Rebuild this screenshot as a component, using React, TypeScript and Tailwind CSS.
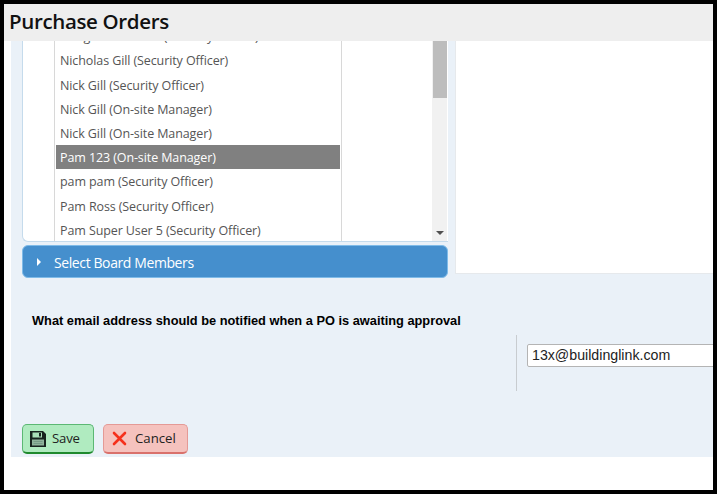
const users = [
  "Morgan Hamilton (Security Officer)",
  "Nicholas Gill (Security Officer)",
  "Nick Gill (Security Officer)",
  "Nick Gill (On-site Manager)",
  "Nick Gill (On-site Manager)",
  "Pam 123 (On-site Manager)",
  "pam pam (Security Officer)",
  "Pam Ross (Security Officer)",
  "Pam Super User 5 (Security Officer)",
];

const SaveIcon = () => (
  <svg width="18" height="18" viewBox="0 0 18 18">
    <path d="M1 1h13l3 3v13H1z" fill="#17231e" />
    <rect x="3.5" y="2.5" width="9.5" height="5" fill="#a9dfb8" />
    <rect x="10" y="3" width="2" height="3.5" fill="#17231e" />
    <rect x="3" y="9.5" width="12" height="6" fill="#8fb39b" />
    <path d="M4.5 11.5h9M4.5 13.5h9" stroke="#6f9480" strokeWidth="0.8" />
  </svg>
);

const CancelIcon = () => (
  <svg width="15" height="15" viewBox="0 0 15 15">
    <path d="M2 2l11 11M13 2L2 13" stroke="#f5301c" strokeWidth="2.6" strokeLinecap="round" />
  </svg>
);

export default function App() {
  return (
    <div className="w-[717px] h-[494px] bg-black p-1 font-['Open_Sans',sans-serif] overflow-hidden">
      <div className="h-full flex flex-col bg-white">
        <div className="h-[37px] shrink-0 bg-[#eeeeee] pl-[5px] pb-[2px] flex items-center">
          <h1 className="text-[20.5px] font-semibold tracking-[-0.35px] text-[#111] leading-none">Purchase Orders</h1>
        </div>

        <div className="ml-[7px] h-[416px] shrink-0 bg-[#eaf1f8] pl-[11px] flex flex-col">
          <div className="flex gap-2 h-[233px] shrink-0">
            <div className="w-[426px] shrink-0 flex flex-col">
              <div className="h-[201px] shrink-0 bg-white border-l border-b border-[#c5dbec] rounded-bl-md flex overflow-hidden pl-[31px]">
                <div className="w-[288px] shrink-0 border-x border-[#d8d8d8] overflow-hidden px-px">
                  <div className="-mt-[17px]">
                    {users.map((name, i) => (
                      <div
                        key={i}
                        className={
                          i === 5
                            ? "h-[24.2px] pt-[3px] flex items-center px-1 text-[12.5px] tracking-[-0.1px] whitespace-nowrap bg-[#808080] text-white"
                            : "h-[24.2px] pt-[3px] flex items-center px-1 text-[12.5px] tracking-[-0.1px] whitespace-nowrap text-[#555]"
                        }
                      >
                        {name}
                      </div>
                    ))}
                  </div>
                </div>
                <div className="flex-1" />
                <div className="w-[15px] shrink-0 mr-px bg-[#f1f1f1] flex flex-col justify-between items-center">
                  <div className="w-[14px] h-[57px] bg-[#bdbdbd]" />
                  <div className="mb-[6px] w-0 h-0 border-x-[4px] border-x-transparent border-t-[4px] border-t-[#505050]" />
                </div>
              </div>
              <div className="mt-[3px] h-[33px] shrink-0 bg-[#458fcd] border border-[#7fbbe8] rounded-md flex items-center pl-[14px] text-white text-[14px] tracking-[-0.4px] font-medium">
                <span className="w-0 h-0 border-y-[4px] border-y-transparent border-l-[4px] border-l-white" />
                <span className="ml-[13px] pt-px">Select Board Members</span>
              </div>
            </div>
            <div className="flex-1 -ml-px bg-white border-b border-l border-[#e6e9ec]" />
          </div>

          <p className="mt-[39px] ml-[10px] text-[12.8px] font-bold text-black font-['Liberation_Sans',sans-serif] leading-[15px]">
            What email address should be notified when a PO is awaiting approval
          </p>

          <div className="mt-[7px] h-[56px] shrink-0 flex">
            <div className="ml-[494px] w-px bg-[#c8ccd0]" />
            <div className="ml-[10px] mt-[9px] flex-1 overflow-hidden">
              <input
                readOnly
                value="13x@buildinglink.com"
                className="block w-[220px] h-[23px] pb-[2px] bg-white border border-[#b4b4b4] rounded-[2px] pl-1 text-[14.2px] text-[#222] font-['Liberation_Sans',sans-serif] outline-none"
              />
            </div>
          </div>

          <div className="mt-[33px] flex gap-[9px]">
            <button className="w-[72px] h-[30px] flex items-center pl-[6px] gap-[5px] bg-[#b0ebc0] border border-[#5cb874] border-b-2 border-b-[#1f8a2e] rounded-[5px] text-[13.2px] tracking-[-0.2px] text-[#222]">
              <SaveIcon />
              Save
            </button>
            <button className="w-[85px] h-[30px] flex items-center pl-2 gap-2 bg-[#f5c2be] border border-[#e49a96] border-b-2 border-b-[#d9716c] rounded-[5px] text-[13.2px] text-[#222]">
              <CancelIcon />
              Cancel
            </button>
          </div>
        </div>
      </div>
    </div>
  );
}
